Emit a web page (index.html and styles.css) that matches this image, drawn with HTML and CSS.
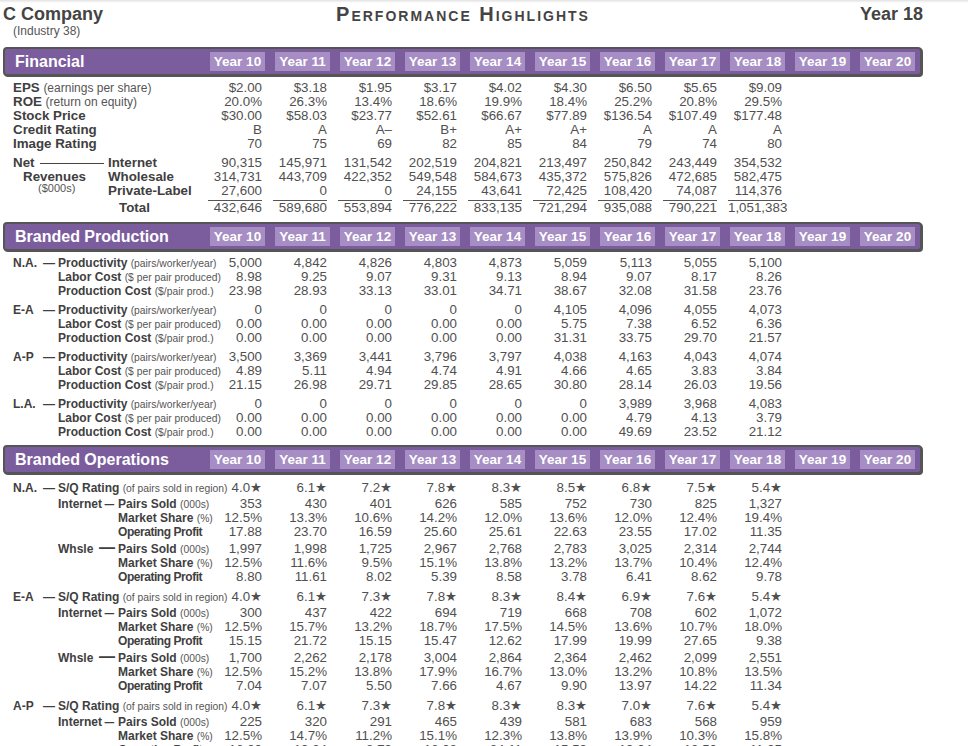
FILE: index.html
```html
<!DOCTYPE html>
<html lang="en">
<head>
<meta charset="utf-8">
<title>C Company - Performance Highlights</title>
<link rel="stylesheet" href="styles.css">
</head>
<body>
<div class="page">
  <header class="top">
    <div class="co">
      <div class="co-name">C Company</div>
      <div class="co-ind">(Industry 38)</div>
    </div>
    <h1 class="title">Performance Highlights</h1>
    <div class="yr-now">Year 18</div>
  </header>

  <section class="sec fin">
    <div class="bar"><h2>Financial</h2><span class="yr">Year 10</span><span class="yr">Year 11</span><span class="yr">Year 12</span><span class="yr">Year 13</span><span class="yr">Year 14</span><span class="yr">Year 15</span><span class="yr">Year 16</span><span class="yr">Year 17</span><span class="yr">Year 18</span><span class="yr">Year 19</span><span class="yr">Year 20</span></div>
    <div class="fin-body">
      <div class="row"><div class="lab"><b>EPS</b> <span class="p">(earnings per share)</span></div><div class="v">$2.00</div><div class="v">$3.18</div><div class="v">$1.95</div><div class="v">$3.17</div><div class="v">$4.02</div><div class="v">$4.30</div><div class="v">$6.50</div><div class="v">$5.65</div><div class="v">$9.09</div></div>
      <div class="row"><div class="lab"><b>ROE</b> <span class="p">(return on equity)</span></div><div class="v">20.0%</div><div class="v">26.3%</div><div class="v">13.4%</div><div class="v">18.6%</div><div class="v">19.9%</div><div class="v">18.4%</div><div class="v">25.2%</div><div class="v">20.8%</div><div class="v">29.5%</div></div>
      <div class="row"><div class="lab"><b>Stock Price</b></div><div class="v">$30.00</div><div class="v">$58.03</div><div class="v">$23.77</div><div class="v">$52.61</div><div class="v">$66.67</div><div class="v">$77.89</div><div class="v">$136.54</div><div class="v">$107.49</div><div class="v">$177.48</div></div>
      <div class="row"><div class="lab"><b>Credit Rating</b></div><div class="v">B</div><div class="v">A</div><div class="v">A–</div><div class="v">B+</div><div class="v">A+</div><div class="v">A+</div><div class="v">A</div><div class="v">A</div><div class="v">A</div></div>
      <div class="row"><div class="lab"><b>Image Rating</b></div><div class="v">70</div><div class="v">75</div><div class="v">69</div><div class="v">82</div><div class="v">85</div><div class="v">84</div><div class="v">79</div><div class="v">74</div><div class="v">80</div></div>

      <div class="rev">
        <div class="rev-lab">
          <div class="net">Net</div>
          <div class="revenues">Revenues</div>
          <div class="unit">($000s)</div>
        </div>
        <div class="ch">Internet</div><div class="v">90,315</div><div class="v">145,971</div><div class="v">131,542</div><div class="v">202,519</div><div class="v">204,821</div><div class="v">213,497</div><div class="v">250,842</div><div class="v">243,449</div><div class="v">354,532</div><div></div><div></div>
        <div class="ch">Wholesale</div><div class="v">314,731</div><div class="v">443,709</div><div class="v">422,352</div><div class="v">549,548</div><div class="v">584,673</div><div class="v">435,372</div><div class="v">575,826</div><div class="v">472,685</div><div class="v">582,475</div><div></div><div></div>
        <div class="ch">Private-Label</div><div class="v">27,600</div><div class="v">0</div><div class="v">0</div><div class="v">24,155</div><div class="v">43,641</div><div class="v">72,425</div><div class="v">108,420</div><div class="v">74,087</div><div class="v">114,376</div><div></div><div></div>
      </div>
      <div class="row total"><div class="lab"><b>Total</b></div><div class="t">432,646</div><div class="t">589,680</div><div class="t">553,894</div><div class="t">776,222</div><div class="t">833,135</div><div class="t">721,294</div><div class="t">935,088</div><div class="t">790,221</div><div class="t">1,051,383</div></div>
    </div>
  </section>

  <section class="sec prod">
    <div class="bar"><h2>Branded Production</h2><span class="yr">Year 10</span><span class="yr">Year 11</span><span class="yr">Year 12</span><span class="yr">Year 13</span><span class="yr">Year 14</span><span class="yr">Year 15</span><span class="yr">Year 16</span><span class="yr">Year 17</span><span class="yr">Year 18</span><span class="yr">Year 19</span><span class="yr">Year 20</span></div>
    <div class="prod-body">
      <div class="grp">
        <div class="row"><div class="plab"><span>N.A.</span><span>—</span><span class="m">Productivity <span class="p2">(pairs/worker/year)</span></span></div><div class="v">5,000</div><div class="v">4,842</div><div class="v">4,826</div><div class="v">4,803</div><div class="v">4,873</div><div class="v">5,059</div><div class="v">5,113</div><div class="v">5,055</div><div class="v">5,100</div></div>
        <div class="row"><div class="plab"><span class="m">Labor Cost <span class="p2">($ per pair produced)</span></span></div><div class="v">8.98</div><div class="v">9.25</div><div class="v">9.07</div><div class="v">9.31</div><div class="v">9.13</div><div class="v">8.94</div><div class="v">9.07</div><div class="v">8.17</div><div class="v">8.26</div></div>
        <div class="row"><div class="plab"><span class="m">Production Cost <span class="p2">($/pair prod.)</span></span></div><div class="v">23.98</div><div class="v">28.93</div><div class="v">33.13</div><div class="v">33.01</div><div class="v">34.71</div><div class="v">38.67</div><div class="v">32.08</div><div class="v">31.58</div><div class="v">23.76</div></div>
      </div>
      <div class="grp">
        <div class="row"><div class="plab"><span>E-A</span><span>—</span><span class="m">Productivity <span class="p2">(pairs/worker/year)</span></span></div><div class="v">0</div><div class="v">0</div><div class="v">0</div><div class="v">0</div><div class="v">0</div><div class="v">4,105</div><div class="v">4,096</div><div class="v">4,055</div><div class="v">4,073</div></div>
        <div class="row"><div class="plab"><span class="m">Labor Cost <span class="p2">($ per pair produced)</span></span></div><div class="v">0.00</div><div class="v">0.00</div><div class="v">0.00</div><div class="v">0.00</div><div class="v">0.00</div><div class="v">5.75</div><div class="v">7.38</div><div class="v">6.52</div><div class="v">6.36</div></div>
        <div class="row"><div class="plab"><span class="m">Production Cost <span class="p2">($/pair prod.)</span></span></div><div class="v">0.00</div><div class="v">0.00</div><div class="v">0.00</div><div class="v">0.00</div><div class="v">0.00</div><div class="v">31.31</div><div class="v">33.75</div><div class="v">29.70</div><div class="v">21.57</div></div>
      </div>
      <div class="grp">
        <div class="row"><div class="plab"><span>A-P</span><span>—</span><span class="m">Productivity <span class="p2">(pairs/worker/year)</span></span></div><div class="v">3,500</div><div class="v">3,369</div><div class="v">3,441</div><div class="v">3,796</div><div class="v">3,797</div><div class="v">4,038</div><div class="v">4,163</div><div class="v">4,043</div><div class="v">4,074</div></div>
        <div class="row"><div class="plab"><span class="m">Labor Cost <span class="p2">($ per pair produced)</span></span></div><div class="v">4.89</div><div class="v">5.11</div><div class="v">4.94</div><div class="v">4.74</div><div class="v">4.91</div><div class="v">4.66</div><div class="v">4.65</div><div class="v">3.83</div><div class="v">3.84</div></div>
        <div class="row"><div class="plab"><span class="m">Production Cost <span class="p2">($/pair prod.)</span></span></div><div class="v">21.15</div><div class="v">26.98</div><div class="v">29.71</div><div class="v">29.85</div><div class="v">28.65</div><div class="v">30.80</div><div class="v">28.14</div><div class="v">26.03</div><div class="v">19.56</div></div>
      </div>
      <div class="grp">
        <div class="row"><div class="plab"><span>L.A.</span><span>—</span><span class="m">Productivity <span class="p2">(pairs/worker/year)</span></span></div><div class="v">0</div><div class="v">0</div><div class="v">0</div><div class="v">0</div><div class="v">0</div><div class="v">0</div><div class="v">3,989</div><div class="v">3,968</div><div class="v">4,083</div></div>
        <div class="row"><div class="plab"><span class="m">Labor Cost <span class="p2">($ per pair produced)</span></span></div><div class="v">0.00</div><div class="v">0.00</div><div class="v">0.00</div><div class="v">0.00</div><div class="v">0.00</div><div class="v">0.00</div><div class="v">4.79</div><div class="v">4.13</div><div class="v">3.79</div></div>
        <div class="row"><div class="plab"><span class="m">Production Cost <span class="p2">($/pair prod.)</span></span></div><div class="v">0.00</div><div class="v">0.00</div><div class="v">0.00</div><div class="v">0.00</div><div class="v">0.00</div><div class="v">0.00</div><div class="v">49.69</div><div class="v">23.52</div><div class="v">21.12</div></div>
      </div>
    </div>
  </section>

  <section class="sec ops">
    <div class="bar"><h2>Branded Operations</h2><span class="yr">Year 10</span><span class="yr">Year 11</span><span class="yr">Year 12</span><span class="yr">Year 13</span><span class="yr">Year 14</span><span class="yr">Year 15</span><span class="yr">Year 16</span><span class="yr">Year 17</span><span class="yr">Year 18</span><span class="yr">Year 19</span><span class="yr">Year 20</span></div>
    <div class="ops-body">
      <div class="grp">
        <div class="row"><div class="plab olab"><span>N.A.</span><span>—</span><span class="sq">S/Q Rating <span class="p2">(of pairs sold in region)</span></span></div><div class="v">4.0★</div><div class="v">6.1★</div><div class="v">7.2★</div><div class="v">7.8★</div><div class="v">8.3★</div><div class="v">8.5★</div><div class="v">6.8★</div><div class="v">7.5★</div><div class="v">5.4★</div></div>
        <div class="sub int">
          <div class="row"><div class="plab olab"><span class="chn"><span>Internet</span><span class="ds">–</span></span><span class="m">Pairs Sold <span class="p2">(000s)</span></span></div><div class="v">353</div><div class="v">430</div><div class="v">401</div><div class="v">626</div><div class="v">585</div><div class="v">752</div><div class="v">730</div><div class="v">825</div><div class="v">1,327</div></div>
          <div class="row"><div class="plab olab"><span class="m">Market Share <span class="p2">(%)</span></span></div><div class="v">12.5%</div><div class="v">13.3%</div><div class="v">10.6%</div><div class="v">14.2%</div><div class="v">12.0%</div><div class="v">13.6%</div><div class="v">12.0%</div><div class="v">12.4%</div><div class="v">19.4%</div></div>
          <div class="row"><div class="plab olab"><span class="m tight">Operating Profit</span></div><div class="v">17.88</div><div class="v">23.70</div><div class="v">16.59</div><div class="v">25.60</div><div class="v">25.61</div><div class="v">22.63</div><div class="v">23.55</div><div class="v">17.02</div><div class="v">11.35</div></div>
        </div>
        <div class="sub whs">
          <div class="row"><div class="plab olab"><span class="chn"><span>Whsle</span><span class="dl">—</span></span><span class="m">Pairs Sold <span class="p2">(000s)</span></span></div><div class="v">1,997</div><div class="v">1,998</div><div class="v">1,725</div><div class="v">2,967</div><div class="v">2,768</div><div class="v">2,783</div><div class="v">3,025</div><div class="v">2,314</div><div class="v">2,744</div></div>
          <div class="row"><div class="plab olab"><span class="m">Market Share <span class="p2">(%)</span></span></div><div class="v">12.5%</div><div class="v">11.6%</div><div class="v">9.5%</div><div class="v">15.1%</div><div class="v">13.8%</div><div class="v">13.2%</div><div class="v">13.7%</div><div class="v">10.4%</div><div class="v">12.4%</div></div>
          <div class="row"><div class="plab olab"><span class="m tight">Operating Profit</span></div><div class="v">8.80</div><div class="v">11.61</div><div class="v">8.02</div><div class="v">5.39</div><div class="v">8.58</div><div class="v">3.78</div><div class="v">6.41</div><div class="v">8.62</div><div class="v">9.78</div></div>
        </div>
      </div>
      <div class="grp">
        <div class="row"><div class="plab olab"><span>E-A</span><span>—</span><span class="sq">S/Q Rating <span class="p2">(of pairs sold in region)</span></span></div><div class="v">4.0★</div><div class="v">6.1★</div><div class="v">7.3★</div><div class="v">7.8★</div><div class="v">8.3★</div><div class="v">8.4★</div><div class="v">6.9★</div><div class="v">7.6★</div><div class="v">5.4★</div></div>
        <div class="sub int">
          <div class="row"><div class="plab olab"><span class="chn"><span>Internet</span><span class="ds">–</span></span><span class="m">Pairs Sold <span class="p2">(000s)</span></span></div><div class="v">300</div><div class="v">437</div><div class="v">422</div><div class="v">694</div><div class="v">719</div><div class="v">668</div><div class="v">708</div><div class="v">602</div><div class="v">1,072</div></div>
          <div class="row"><div class="plab olab"><span class="m">Market Share <span class="p2">(%)</span></span></div><div class="v">12.5%</div><div class="v">15.7%</div><div class="v">13.2%</div><div class="v">18.7%</div><div class="v">17.5%</div><div class="v">14.5%</div><div class="v">13.6%</div><div class="v">10.7%</div><div class="v">18.0%</div></div>
          <div class="row"><div class="plab olab"><span class="m tight">Operating Profit</span></div><div class="v">15.15</div><div class="v">21.72</div><div class="v">15.15</div><div class="v">15.47</div><div class="v">12.62</div><div class="v">17.99</div><div class="v">19.99</div><div class="v">27.65</div><div class="v">9.38</div></div>
        </div>
        <div class="sub whs">
          <div class="row"><div class="plab olab"><span class="chn"><span>Whsle</span><span class="dl">—</span></span><span class="m">Pairs Sold <span class="p2">(000s)</span></span></div><div class="v">1,700</div><div class="v">2,262</div><div class="v">2,178</div><div class="v">3,004</div><div class="v">2,864</div><div class="v">2,364</div><div class="v">2,462</div><div class="v">2,099</div><div class="v">2,551</div></div>
          <div class="row"><div class="plab olab"><span class="m">Market Share <span class="p2">(%)</span></span></div><div class="v">12.5%</div><div class="v">15.2%</div><div class="v">13.8%</div><div class="v">17.9%</div><div class="v">16.7%</div><div class="v">13.0%</div><div class="v">13.2%</div><div class="v">10.8%</div><div class="v">13.5%</div></div>
          <div class="row"><div class="plab olab"><span class="m tight">Operating Profit</span></div><div class="v">7.04</div><div class="v">7.07</div><div class="v">5.50</div><div class="v">7.66</div><div class="v">4.67</div><div class="v">9.90</div><div class="v">13.97</div><div class="v">14.22</div><div class="v">11.34</div></div>
        </div>
      </div>
      <div class="grp">
        <div class="row"><div class="plab olab"><span>A-P</span><span>—</span><span class="sq">S/Q Rating <span class="p2">(of pairs sold in region)</span></span></div><div class="v">4.0★</div><div class="v">6.1★</div><div class="v">7.3★</div><div class="v">7.8★</div><div class="v">8.3★</div><div class="v">8.3★</div><div class="v">7.0★</div><div class="v">7.6★</div><div class="v">5.4★</div></div>
        <div class="sub int">
          <div class="row"><div class="plab olab"><span class="chn"><span>Internet</span><span class="ds">–</span></span><span class="m">Pairs Sold <span class="p2">(000s)</span></span></div><div class="v">225</div><div class="v">320</div><div class="v">291</div><div class="v">465</div><div class="v">439</div><div class="v">581</div><div class="v">683</div><div class="v">568</div><div class="v">959</div></div>
          <div class="row"><div class="plab olab"><span class="m">Market Share <span class="p2">(%)</span></span></div><div class="v">12.5%</div><div class="v">14.7%</div><div class="v">11.2%</div><div class="v">15.1%</div><div class="v">12.3%</div><div class="v">13.8%</div><div class="v">13.9%</div><div class="v">10.3%</div><div class="v">15.8%</div></div>
          <div class="row"><div class="plab olab"><span class="m tight">Operating Profit</span></div><div class="v">16.00</div><div class="v">19.34</div><div class="v">8.79</div><div class="v">16.03</div><div class="v">24.11</div><div class="v">15.59</div><div class="v">19.04</div><div class="v">13.50</div><div class="v">11.95</div></div>
        </div>
      </div>
    </div>
  </section>
</div>
</body>
</html>
```

FILE: styles.css
```css
* { box-sizing: border-box; }

html, body {
  margin: 0;
  padding: 0;
}

body {
  height: 746px;
  overflow: hidden;
  background: #fff linear-gradient(#e2e2e2, #fff 3px) no-repeat;
  font-family: "Liberation Sans", Arial, "DejaVu Sans", sans-serif;
  color: #505050;
}

.page {
  width: 923px;
  padding: 4px 0 0 3px;
}

/* ---------- page header ---------- */
.top {
  display: grid;
  grid-template-columns: 1fr auto 1fr;
  align-items: start;
  color: #444;
}

.co-name {
  font-size: 18px;
  line-height: 20px;
  font-weight: bold;
}

.co-ind {
  font-size: 12px;
  line-height: 14px;
  padding-left: 10px;
  color: #555;
}

.title {
  margin: 0;
  font-size: 20px;
  line-height: 20px;
  font-weight: bold;
  font-variant: small-caps;
  letter-spacing: 2px;
  color: #444;
}

.yr-now {
  justify-self: end;
  font-size: 18px;
  line-height: 20px;
  font-weight: bold;
}

/* ---------- section bars ---------- */
.bar {
  display: grid;
  grid-template-columns: 185px repeat(11, 55px);
  column-gap: 10px;
  width: max-content;
  padding: 3px 5px 3px 10px;
  background: #7b5d9e;
  border: 2px solid #555;
  border-radius: 4px;
  box-shadow: 1px 1px 0 #555;
}

.bar h2 {
  margin: 0;
  font-size: 16px;
  line-height: 19px;
  color: #fff;
  white-space: nowrap;
}

.yr {
  background: #a68dc3;
  color: #fff;
  font-weight: bold;
  font-size: 13.5px;
  line-height: 19px;
  text-align: center;
  white-space: nowrap;
}

.fin .bar { margin-top: 9px; }
.prod .bar { margin-top: 7px; }
.ops .bar { margin-top: 6px; }

/* ---------- rows ---------- */
.row {
  display: grid;
  grid-template-columns: 197px repeat(11, 65px);
  height: 14px;
  font-size: 13.33px;
  line-height: 14px;
  white-space: nowrap;
}

.v {
  text-align: right;
  padding-right: 3px;
}

.lab {
  padding-left: 10px;
  color: #404040;
}

.lab .p {
  font-size: 12px;
  line-height: 10px;
  color: #555;
}

/* financial */
.fin-body { margin-top: 5px; }

.rev {
  display: grid;
  grid-template-columns: 105px 92px repeat(11, 65px);
  grid-auto-rows: 14px;
  margin-top: 5px;
  font-size: 13.33px;
  line-height: 14px;
  white-space: nowrap;
}

.rev-lab {
  grid-row: span 3;
  padding-left: 10px;
  font-weight: bold;
  color: #404040;
}

.net {
  display: flex;
  align-items: center;
}

.net::after {
  content: "";
  flex: 1;
  height: 1px;
  margin: 1px 4px 0 6px;
  background: #444;
}

.revenues { padding-left: 10px; }

.unit {
  padding-left: 25px;
  margin-top: -2px;
  font-size: 11px;
  line-height: 12px;
  font-weight: normal;
  color: #555;
}

.ch {
  font-weight: bold;
  color: #404040;
}

.row.total {
  height: 15px;
  margin-top: 2px;
}

.total .lab {
  padding-left: 116px;
  border-top: 1px solid transparent;
}

.t {
  margin: 0 3px 0 8px;
  border-top: 1px solid #555;
  text-align: right;
}

/* production / operations labels */
.prod-body { margin-top: 5px; }
.ops-body { margin-top: 7px; }

.prod .grp + .grp { margin-top: 5px; }
.ops .grp + .grp { margin-top: 6px; }
.sub.int { margin-top: 2px; }
.sub.whs { margin-top: 3px; }

.plab {
  display: grid;
  grid-template-columns: 30px 15px minmax(0, 1fr);
  padding-left: 10px;
  font-size: 12px;
  font-weight: bold;
  color: #404040;
}

.plab > .m { grid-column: 3; }

.olab {
  grid-template-columns: 30px 15px 60px minmax(0, 1fr);
}

.olab > .m { grid-column: 4; }
.olab > .sq { grid-column: 3 / span 2; }

.olab > .chn {
  grid-column: 3;
  display: flex;
  justify-content: space-between;
  align-items: baseline;
  padding-right: 3px;
}

.ds,
.dl {
  line-height: 10px;
  transform: scaleX(1.6);
  transform-origin: right center;
}

.dl { transform: none; font-size: 16px; }

.p2 {
  font-size: 10.3px;
  line-height: 10px;
  font-weight: normal;
  color: #555;
}

.tight { letter-spacing: -0.45px; }
```
